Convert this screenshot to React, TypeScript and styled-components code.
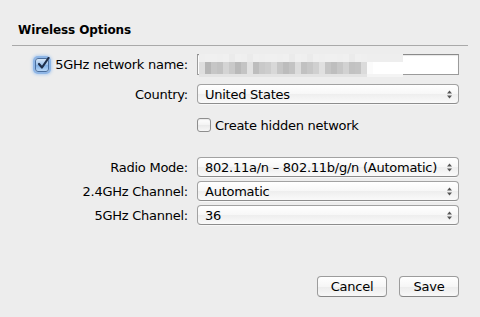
import styled, { createGlobalStyle } from 'styled-components'

const GlobalStyle = createGlobalStyle`
    html, body {
        margin: 0;
        padding: 0;
        background: #ededed;
    }
    body {
        font-family: "DejaVu Sans", "Liberation Sans", sans-serif;
        font-size: 13px;
        color: #000;
    }
`

const Root = styled.div`
    width: 480px;
    height: 317px;
    display: flex;
    flex-direction: column;
    background: #ededed;
    overflow: hidden;
`

const Title = styled.div`
    padding: 23px 0 0 18px;
    height: 45px;
    box-sizing: border-box;
    font-weight: bold;
    font-size: 12px;
    line-height: 15px;
    letter-spacing: -0.1px;
`

const Divider = styled.div`
    margin: 0 12px;
    height: 1px;
    background: #a9a9a9;
`

const Row = styled.div<{ $top: number; $height: number }>`
    display: grid;
    grid-template-columns: 176px 262px;
    column-gap: 9px;
    align-items: center;
    margin: ${(p) => p.$top}px 0 0 12px;
    height: ${(p) => p.$height}px;
`

const Label = styled.label`
    display: flex;
    align-items: center;
    justify-content: flex-end;
    gap: 6px;
    font-size: 13px;
    letter-spacing: -0.25px;
    white-space: nowrap;
`

const CheckBox = styled.span<{ $checked?: boolean }>`
    position: relative;
    width: 12px;
    height: 12px;
    border-radius: 3px;
    flex: none;
    border: 1px solid ${(p) => (p.$checked ? '#4a6f9f' : '#8e8e8e')};
    background: ${(p) =>
        p.$checked
            ? 'linear-gradient(#d6e6f7, #9cc1ea 50%, #7fb0e6 51%, #b7d5f5)'
            : 'linear-gradient(#ffffff, #f3f3f3 50%, #e9e9e9 51%, #f7f7f7)'};
    box-shadow: ${(p) => (p.$checked ? '0 0 0 2px #8fb6e6, 0 0 3px 3px #b5cfee' : 'inset 0 1px 1px rgba(0,0,0,0.08)')};

    svg {
        position: absolute;
        left: 1px;
        top: -2px;
    }
`

const CheckRow = styled.label`
    display: flex;
    align-items: center;
    gap: 4px;
    font-size: 13px;
    letter-spacing: -0.25px;
    white-space: nowrap;
`

const TextInput = styled.div`
    position: relative;
    height: 21px;
    box-sizing: border-box;
    background: #fff;
    border: 1px solid #9b9b9b;
    border-top-color: #8a8a8a;
    box-shadow: inset 0 1px 1px rgba(0, 0, 0, 0.1);
`

const Pixelated = styled.div`
    position: absolute;
    left: 1px;
    top: -1px;
    width: 204px;
    height: 23px;
    display: grid;
    grid-template-rows: 8px 12px 3px;
    grid-auto-flow: column;
    grid-auto-columns: 6px;
`

const Pixel = styled.div<{ $shade: string }>`
    background: ${(p) => p.$shade};
`

const Select = styled.div`
    position: relative;
    height: 20px;
    box-sizing: border-box;
    display: flex;
    align-items: center;
    padding: 0 20px 0 7px;
    border: 1px solid #a2a2a2;
    border-bottom-color: #8d8d8d;
    border-radius: 4px;
    background: linear-gradient(#ffffff, #f7f7f7 50%, #eeeeee 51%, #fafafa);
    box-shadow: 0 1px 0 rgba(255, 255, 255, 0.6);
    font-size: 13px;
    letter-spacing: -0.25px;
    white-space: nowrap;

    svg {
        position: absolute;
        right: 6px;
        top: 5px;
    }
`

const Footer = styled.div`
    margin-top: auto;
    display: flex;
    justify-content: flex-end;
    gap: 12px;
    padding: 0 21px 20px 0;
`

const Button = styled.button<{ $width: number }>`
    width: ${(p) => p.$width}px;
    height: 21px;
    padding: 0;
    border: 1px solid #9c9c9c;
    border-bottom-color: #868686;
    border-radius: 4px;
    background: linear-gradient(#ffffff, #f6f6f6 50%, #ececec 51%, #f8f8f8);
    font-family: inherit;
    font-size: 13px;
    letter-spacing: -0.25px;
    color: #000;
`

const UpDown = () => (
    <svg width="5" height="9" viewBox="0 0 5 9">
        <path d="M2.5 0.5 L5 3.5 L0 3.5 Z" fill="#555" />
        <path d="M0 5.5 L5 5.5 L2.5 8.5 Z" fill="#555" />
    </svg>
)

const Check = () => (
    <svg width="13" height="13" viewBox="0 0 13 13">
        <path d="M2 7 L5 10.5 L11.5 1" fill="none" stroke="#1f2f4a" strokeWidth="2.2" strokeLinecap="round" strokeLinejoin="round" />
    </svg>
)

const topRow = ['#efefef', '#f0f0f0', '#f0f0f0', '#efefef', '#f0f0f0', '#ebebeb', '#f0f0f0', '#efefef', '#ebebeb', '#f0f0f0']
const midRow = [
    '#dedede', '#b6b6b6', '#c6c6c6', '#c2c2c2', '#d4d4d4', '#c9c9c9', '#b9b9b9', '#c4c4c4', '#e2e2e2', '#bdbdbd',
    '#c9c9c9', '#cdcdcd', '#d8d8d8', '#c6c6c6', '#bcbcbc', '#c3c3c3', '#dcdcdc', '#c1c1c1', '#c7c7c7', '#d0d0d0',
    '#e0e0e0', '#c5c5c5', '#bebebe', '#c7c7c7', '#d2d2d2', '#c2c2c2', '#c4c4c4', '#dbdbdb', '#fbfbfb', '#ffffff',
    '#ffffff', '#ffffff', '#ffffff', '#ffffff',
]

const selects = [
    { label: 'Radio Mode:', value: '802.11a/n – 802.11b/g/n (Automatic)', top: 24 },
    { label: '2.4GHz Channel:', value: 'Automatic', top: 4 },
    { label: '5GHz Channel:', value: '36', top: 4 },
]

const App = () => {
    return (
        <Root>
            <GlobalStyle />
            <Title>Wireless Options</Title>
            <Divider />

            <Row $top={8} $height={21}>
                <Label>
                    <CheckBox $checked>
                        <Check />
                    </CheckBox>
                    5GHz network name:
                </Label>
                <TextInput>
                    <Pixelated>
                        {midRow.map((shade, i) => [
                            <Pixel key={`t${i}`} $shade={i > 27 ? '#eeeeee' : topRow[i % topRow.length]} />,
                            <Pixel key={`m${i}`} $shade={shade} />,
                            <Pixel key={`b${i}`} $shade={i > 27 ? '#f4f4f4' : '#e3e3e3'} />,
                        ])}
                    </Pixelated>
                </TextInput>
            </Row>

            <Row $top={9} $height={20}>
                <Label>Country:</Label>
                <Select>
                    United States
                    <UpDown />
                </Select>
            </Row>

            <Row $top={13} $height={16}>
                <span />
                <CheckRow>
                    <CheckBox />
                    Create hidden network
                </CheckRow>
            </Row>

            {selects.map((s) => (
                <Row key={s.label} $top={s.top} $height={20}>
                    <Label>{s.label}</Label>
                    <Select>
                        {s.value}
                        <UpDown />
                    </Select>
                </Row>
            ))}

            <Footer>
                <Button $width={70}>Cancel</Button>
                <Button $width={60}>Save</Button>
            </Footer>
        </Root>
    )
}

export default App
